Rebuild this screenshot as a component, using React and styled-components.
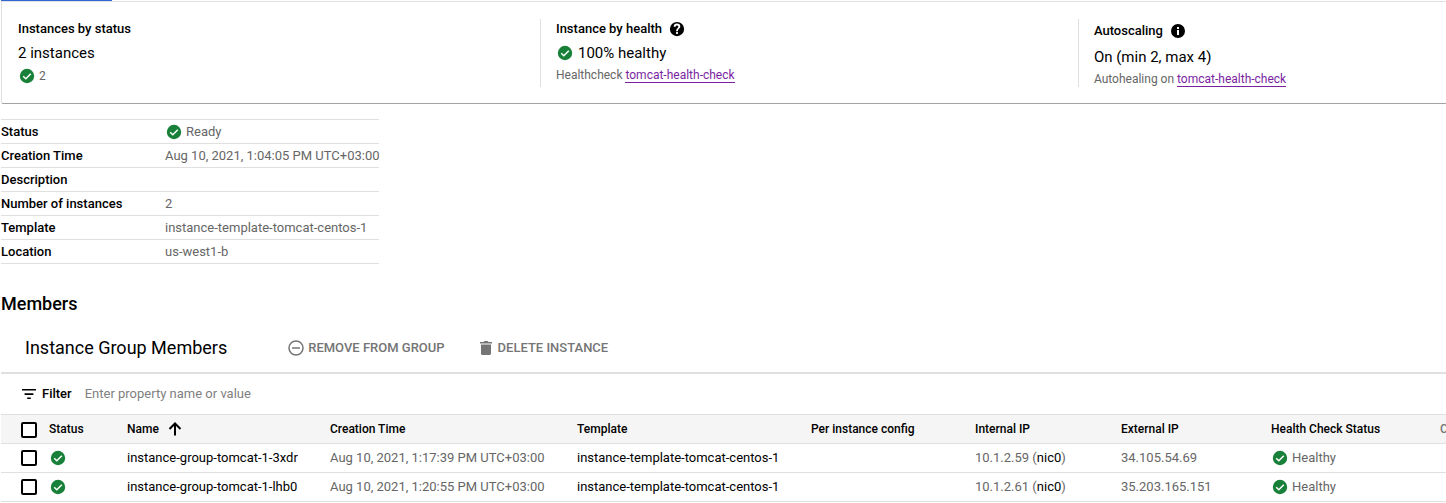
import React from "react";
import styled, { createGlobalStyle } from "styled-components";

const GlobalStyle = createGlobalStyle`
  * { box-sizing: border-box; }
  body {
    margin: 0;
    background: #fff;
    color: #000;
    font-family: Roboto, "Liberation Sans", sans-serif;
    font-size: 13px;
    line-height: 20px;
    overflow-x: hidden;
  }
`;

const line = "#e0e0e0";
const muted = "#666";

const Page = styled.main`
  padding-left: 1px;
`;

const TabBar = styled.div`
  height: 2px;
  border-bottom: 1px solid ${line};
`;

const TabIndicator = styled.div`
  width: 111px;
  height: 1px;
  background: #3367d6;
`;

const Summary = styled.section`
  display: grid;
  grid-template-columns: 19fr 19fr 13fr;
  padding: 17px 0 16px;
  border-left: 1px solid ${line};
  border-bottom: 1px solid #a3a3a3;
  border-bottom-left-radius: 2px;
`;

const Card = styled.div`
  min-height: 68px;
  padding-left: 16px;
  white-space: nowrap;
  & + & {
    padding-left: 15px;
    border-left: 1px solid ${line};
  }
`;

const CardTitle = styled.h2`
  display: flex;
  align-items: center;
  gap: 6px;
  margin: 0;
  font-size: 13px;
  font-weight: 500;
  line-height: ${(p) => (p.$tall ? "24px" : "20px")};
`;

const CardValue = styled.div`
  display: flex;
  align-items: center;
  gap: 4px;
  font-size: 15px;
  line-height: 28px;
`;

const CardNote = styled.div`
  color: ${muted};
  font-size: 12px;
  line-height: 16px;
`;

const HealthLink = styled.a`
  color: #7b1fa2;
  text-decoration: none;
  border-bottom: 1px solid #7b1fa2;
`;

const Details = styled.table`
  width: 378px;
  margin-top: 15px;
  border-collapse: separate;
  border-spacing: 0;
  border-top: 1px solid ${line};
  white-space: nowrap;
  th, td {
    height: 24px;
    padding: 0;
    border-bottom: 1px solid ${line};
    text-align: left;
  }
  th {
    width: 164px;
    font-weight: 500;
  }
  td {
    max-width: 214px;
    color: ${muted};
  }
`;

const WithIcon = styled.span`
  display: flex;
  align-items: center;
  gap: 3px;
`;

const SectionTitle = styled.h2`
  margin: 28px 0 0;
  font-size: 18px;
  font-weight: 500;
  line-height: 24px;
`;

const Toolbar = styled.div`
  display: flex;
  align-items: center;
  height: 58px;
  padding: 8px 24px 0;
  border-bottom: 2px solid ${line};
`;

const ToolbarTitle = styled.h3`
  margin: 0 61px 0 0;
  font-size: 18px;
  font-weight: 400;
`;

const ToolButton = styled.button`
  display: flex;
  align-items: center;
  gap: 4px;
  margin-right: 33px;
  padding: 0;
  border: 0;
  background: none;
  color: #757575;
  font: inherit;
  font-weight: 500;
  text-transform: uppercase;
`;

const FilterRow = styled.div`
  display: flex;
  align-items: center;
  height: 40px;
  padding-left: 19px;
`;

const FilterLabel = styled.label`
  display: flex;
  align-items: center;
  gap: 4px;
  font-weight: 500;
`;

const FilterInput = styled.input`
  flex: 1;
  margin-left: 13px;
  padding: 0;
  border: 0;
  outline: 0;
  font: inherit;
  &::placeholder {
    color: #808080;
    opacity: 1;
  }
`;

const TableScroller = styled.div`
  overflow: hidden;
`;

const Members = styled.table`
  width: 1600px;
  table-layout: fixed;
  border-collapse: separate;
  border-spacing: 0;
  border-top: 1px solid ${line};
  white-space: nowrap;
  th, td {
    height: 29px;
    padding: 0;
    border-bottom: 1px solid ${line};
    text-align: left;
  }
  th {
    background: #f5f5f5;
    font-size: 12px;
    font-weight: 500;
  }
  td {
    color: ${muted};
  }
`;

const Column = styled.col`
  width: ${(p) => p.$width}px;
`;

const CheckCell = styled.td`
  && { padding-left: 20px; }
  th&& { padding-top: 2px; }
`;

const Checkbox = styled.input`
  display: block;
  appearance: none;
  width: 16px;
  height: 16px;
  margin: 0;
  border: 2px solid #000;
  border-radius: 2px;
  background: #fff;
`;

const Strong = styled.span`
  color: #000;
`;

const PlainLink = styled.a`
  color: #000;
  text-decoration: none;
`;

const MutedHeading = styled.span`
  color: #757575;
`;

const SortLabel = styled.span`
  display: flex;
  align-items: center;
  gap: 7px;
`;

const Icon = styled.svg`
  flex: none;
  display: block;
`;

const CheckIcon = () => (
  <Icon width="18" height="18" viewBox="0 0 18 18" aria-hidden="true">
    <circle cx="9" cy="9" r="7.2" fill="#188038" />
    <path d="M5.200 9.200l2.600 2.600 5-5" fill="none" stroke="#fff" strokeWidth="1.5" />
  </Icon>
);

const HelpIcon = () => (
  <Icon width="18" height="18" viewBox="0 0 24 24" aria-hidden="true">
    <path d="M12 2.500a9.500 9.500 0 1 0 0 19 9.500 9.500 0 0 0 0-19zm1.200 16h-2.400v-2.400h2.400zm2.200-7.400l-1 1c-.8.8-1.200 1.400-1.200 2.800h-2.400v-.6c0-1 .4-2 1.200-2.700l1.200-1.300c.4-.3.6-.8.6-1.300a1.800 1.800 0 0 0-3.600 0H7.600a4.400 4.400 0 0 1 8.800 0c0 .8-.4 1.500-1 2.100z" />
  </Icon>
);

const InfoIcon = () => (
  <Icon width="18" height="18" viewBox="0 0 18 18" aria-hidden="true">
    <path d="M9 2a7 7 0 1 0 0 14A7 7 0 0 0 9 2zM8 5h2v2H8zm0 3h2v5H8z" fillRule="evenodd" />
  </Icon>
);

const RemoveIcon = () => (
  <Icon width="16" height="16" viewBox="0 0 16 16" fill="none" stroke="#757575" strokeWidth="1.5" aria-hidden="true">
    <circle cx="8" cy="8" r="7" />
    <path d="M4 8h8" />
  </Icon>
);

const TrashIcon = () => (
  <Icon width="16" height="16" viewBox="-1 0 16 16" fill="#757575" aria-hidden="true">
    <path d="M1 2h3.500l1-1h3l1 1H13v1.500H1zM2 4.500h10v9A1.500 1.500 0 0 1 10.500 15h-7A1.500 1.500 0 0 1 2 13.500z" />
  </Icon>
);

const FilterIcon = () => (
  <Icon width="18" height="18" viewBox="0 0 18 18" aria-hidden="true">
    <path d="M2 4h14v1.600H2zM4.600 8.300h8.800v1.600H4.600zM7.200 12.500h3.600v1.600H7.200z" />
  </Icon>
);

const ArrowIcon = () => (
  <Icon width="18" height="18" viewBox="0 0 18 18" fill="none" stroke="#000" strokeWidth="2" aria-hidden="true">
    <path d="M9 15.500V3.500M3.500 9L9 3.500 14.500 9" />
  </Icon>
);

const details = [
  ["Status", <WithIcon><CheckIcon />Ready</WithIcon>],
  ["Creation Time", "Aug 10, 2021, 1:04:05 PM UTC+03:00"],
  ["Description", ""],
  ["Number of instances", "2"],
  ["Template", "instance-template-tomcat-centos-1"],
  ["Location", "us-west1-b"],
];

const members = [
  { name: "instance-group-tomcat-1-3xdr", created: "Aug 10, 2021, 1:17:39 PM UTC+03:00", internal: "10.1.2.59", external: "34.105.54.69" },
  { name: "instance-group-tomcat-1-lhb0", created: "Aug 10, 2021, 1:20:55 PM UTC+03:00", internal: "10.1.2.61", external: "35.203.165.151" },
];

const columnWidths = [48, 78, 203, 247, 234, 164, 146, 150, 169, 161];

export default function App() {
  return (
    <Page>
      <GlobalStyle />
      <TabBar><TabIndicator /></TabBar>
      <Summary>
        <Card>
          <CardTitle>Instances by status</CardTitle>
          <CardValue>2 instances</CardValue>
          <CardNote><WithIcon><CheckIcon />2</WithIcon></CardNote>
        </Card>
        <Card>
          <CardTitle>Instance by health <HelpIcon /></CardTitle>
          <CardValue><CheckIcon />100% healthy</CardValue>
          <CardNote>Healthcheck <HealthLink href="#health">tomcat-health-check</HealthLink></CardNote>
        </Card>
        <Card>
          <CardTitle $tall>Autoscaling <InfoIcon /></CardTitle>
          <CardValue>On (min 2, max 4)</CardValue>
          <CardNote>Autohealing on <HealthLink href="#health">tomcat-health-check</HealthLink></CardNote>
        </Card>
      </Summary>

      <Details>
        <tbody>
          {details.map(([label, value]) => (
            <tr key={label}>
              <th scope="row">{label}</th>
              <td>{value}</td>
            </tr>
          ))}
        </tbody>
      </Details>

      <SectionTitle>Members</SectionTitle>
      <Toolbar>
        <ToolbarTitle>Instance Group Members</ToolbarTitle>
        <ToolButton type="button"><RemoveIcon />Remove from group</ToolButton>
        <ToolButton type="button"><TrashIcon />Delete instance</ToolButton>
      </Toolbar>
      <FilterRow>
        <FilterLabel htmlFor="filter"><FilterIcon />Filter</FilterLabel>
        <FilterInput id="filter" placeholder="Enter property name or value" />
      </FilterRow>
      <TableScroller>
        <Members>
          <colgroup>
            {columnWidths.map((width, i) => <Column key={i} $width={width} />)}
          </colgroup>
          <thead>
            <tr>
              <CheckCell as="th"><Checkbox type="checkbox" aria-label="Select all instances" /></CheckCell>
              <th>Status</th>
              <th><SortLabel>Name <ArrowIcon /></SortLabel></th>
              <th>Creation Time</th>
              <th>Template</th>
              <th>Per instance config</th>
              <th>Internal IP</th>
              <th>External IP</th>
              <th>Health Check Status</th>
              <th><MutedHeading>Connect</MutedHeading></th>
            </tr>
          </thead>
          <tbody>
            {members.map((m) => (
              <tr key={m.name}>
                <CheckCell><Checkbox type="checkbox" aria-label={"Select " + m.name} /></CheckCell>
                <td><CheckIcon /></td>
                <td><PlainLink href="#instance">{m.name}</PlainLink></td>
                <td>{m.created}</td>
                <td><PlainLink href="#template">instance-template-tomcat-centos-1</PlainLink></td>
                <td />
                <td>{m.internal} (<Strong>nic0</Strong>)</td>
                <td>{m.external}</td>
                <td><WithIcon><CheckIcon />Healthy</WithIcon></td>
                <td />
              </tr>
            ))}
          </tbody>
        </Members>
      </TableScroller>
    </Page>
  );
}
